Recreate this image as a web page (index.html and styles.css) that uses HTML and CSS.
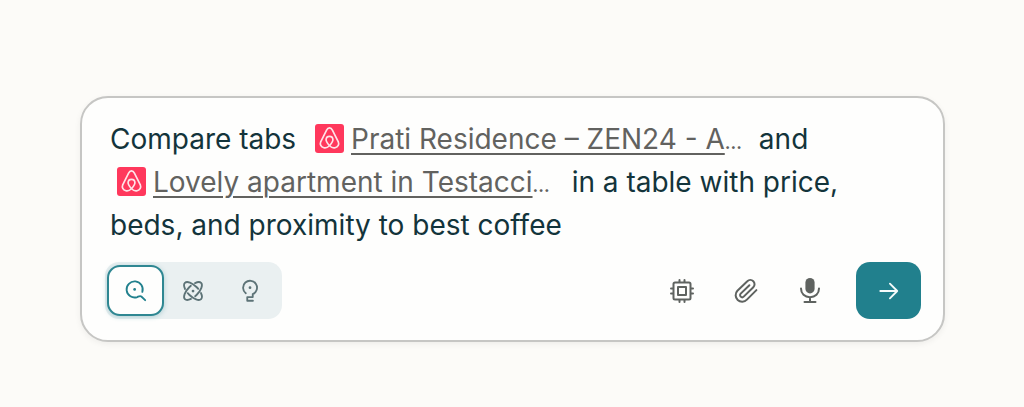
FILE: index.html
```html
<!DOCTYPE html>
<html lang="en">
<head>
    <meta charset="UTF-8">
    <meta name="viewport" content="width=device-width, initial-scale=1.0">
    <title>Ask</title>
    <link rel="stylesheet" href="styles.css">
</head>
<body>

<svg class="symbols" aria-hidden="true">
    <symbol id="airbnb" viewBox="0 0 28 28">
        <path d="M14 21C11.8 18.6 10.7 16.9 10.7 15.3C10.7 13.3 12 12 14 12C16 12 17.3 13.3 17.3 15.3C17.3 16.9 16.2 18.6 14 21C12.2 22.7 10.4 23.4 8.6 22.9C5.6 22.1 4.5 19.7 5.5 17.3L11.2 5.8C11.9 4.4 12.8 3.8 14 3.8C15.2 3.8 16.1 4.4 16.8 5.8L22.5 17.3C23.5 19.7 22.4 22.1 19.4 22.9C17.6 23.4 15.8 22.7 14 21Z"/>
    </symbol>
</svg>

<form class="ask-box">
    <div class="prompt" role="textbox" aria-label="Prompt" aria-multiline="true" contenteditable="true" spellcheck="false">Compare tabs <span class="tab"><svg class="tab-icon"><use href="#airbnb"/></svg><a href="#prati">Prati Residence – ZEN24 - A</a><span class="dots">…</span></span> and<br><span class="tab wrapped"><svg class="tab-icon"><use href="#airbnb"/></svg><a href="#lovely">Lovely apartment in Testacci</a><span class="dots">…</span></span> in a table with price,<br>beds, and proximity to best coffee</div>

    <div class="toolbar">
        <div class="modes">
            <button type="button" class="mode active" aria-label="Search" aria-pressed="true">
                <svg viewBox="0 0 24 24">
                    <path d="M18.9 13A8.8 8.8 0 1 0 13.4 18.6C15 17.9 16.4 16.8 17.8 18L22 22"/>
                    <circle class="dot" cx="10.5" cy="10.3" r="1.5"/>
                </svg>
            </button>
            <button type="button" class="mode" aria-label="Research" aria-pressed="false">
                <svg viewBox="0 0 24 24">
                    <ellipse class="orbit" cx="12" cy="12" rx="12.5" ry="5.8" pathLength="100" transform="rotate(45 12 12)"/>
                    <ellipse class="orbit" cx="12" cy="12" rx="12.5" ry="5.8" pathLength="100" transform="rotate(-45 12 12)"/>
                    <circle class="dot" cx="12" cy="12" r="1.5"/>
                </svg>
            </button>
            <button type="button" class="mode" aria-label="Labs" aria-pressed="false">
                <svg viewBox="0 0 24 24">
                    <path d="M7.4 14.4A7.6 7.6 0 1 1 15 15.4V18.6H9V22.6H15.2"/>
                    <circle class="dot" cx="12" cy="8.4" r="1.5"/>
                </svg>
            </button>
        </div>

        <div class="actions">
            <button type="button" class="action" aria-label="Choose model">
                <svg viewBox="0 0 24 24">
                    <rect x="3.5" y="3.5" width="17" height="17" rx="1.5"/>
                    <rect x="8" y="8" width="8" height="8"/>
                    <path d="M9.5 3V1M14.5 3V1M9.5 21V23M14.5 21V23M3 9.5H1M3 14.5H1M21 9.5H23M21 14.5H23"/>
                </svg>
            </button>
            <button type="button" class="action" aria-label="Attach file">
                <svg viewBox="0 0 24 24">
                    <path d="M22.4 11.1L12.9 20.6A6.3 6.3 0 0 1 3.4 11.7L13.3 2.3A4.2 4.2 0 0 1 19.3 8.3L9.7 17.6A2.1 2.1 0 0 1 6.7 14.6L15.4 6.2"/>
                </svg>
            </button>
            <button type="button" class="action" aria-label="Dictate">
                <svg viewBox="0 0 24 24">
                    <rect class="dot" x="7.4" y="-1" width="9.2" height="15.4" rx="4.6"/>
                    <path d="M3 9.5C3 14.8 6.7 18.2 12 18.2S21 14.8 21 9.5M12 18.2V23M6.5 23H17.5"/>
                </svg>
            </button>
            <button type="submit" class="submit" aria-label="Submit">
                <svg viewBox="0 0 24 24">
                    <path d="M2.5 12H21M13 4L21 12L13 20"/>
                </svg>
            </button>
        </div>
    </div>
</form>

</body>
</html>
```
FILE: styles.css
```css
* {
    box-sizing: border-box;
}

body {
    margin: 0;
    padding: 96px 79px 64px 80px;
    background-color: #fcfbf8;
    color: #13343b;
    font-family: Inter, "Liberation Sans", sans-serif;
}

.symbols {
    display: none;
}

.ask-box {
    padding: 20px 22px 21px 23px;
    background-color: #fefefd;
    border: 2px solid #c6c6c4;
    border-radius: 28px;
    box-shadow: 0 2px 6px rgba(0, 0, 0, 0.06);
}

.prompt {
    padding: 0 5px;
    font-size: 28px;
    line-height: 43px;
    outline: none;
}

.tab {
    margin: 0 9px 0 11px;
    color: #62625f;
    white-space: nowrap;
}

.tab.wrapped {
    margin: 0 14px 0 7px;
}

.tab a {
    color: inherit;
    text-decoration-thickness: 2px;
    text-underline-offset: 4px;
}

.dots {
    font-size: 18px;
    font-weight: 600;
    line-height: 1;
}

.tab-icon {
    width: 29px;
    height: 29px;
    margin-right: 7px;
    vertical-align: -4px;
    background-color: #ff385c;
    border-radius: 3px;
    fill: none;
    stroke: #ffe4e8;
    stroke-width: 1.6;
}

.toolbar {
    display: flex;
    justify-content: space-between;
    align-items: center;
    margin-top: 15px;
}

.modes {
    display: flex;
    padding: 3px 4px 3px 2px;
    background-color: #eaf0f1;
    border-radius: 14px;
}

.actions {
    display: flex;
    align-items: center;
}

button {
    display: flex;
    justify-content: center;
    align-items: center;
    padding: 0;
    border: none;
    background: none;
    color: #5f6360;
    cursor: pointer;
}

button svg {
    width: 24px;
    height: 24px;
    overflow: visible;
    fill: none;
    stroke: currentColor;
    stroke-width: 2;
    stroke-linecap: round;
    stroke-linejoin: round;
}

.dot {
    fill: currentColor;
    stroke: none;
}

.orbit {
    stroke-dasharray: 41 9;
    stroke-dashoffset: -38;
}

.mode {
    width: 57px;
    height: 51px;
    color: #5d7377;
}

.mode svg {
    width: 22px;
    height: 22px;
}

.mode.active {
    background-color: #fefefd;
    border: 2px solid #2f8792;
    border-radius: 13px;
    box-shadow: 0 1px 5px rgba(33, 128, 141, 0.3);
    color: #21808d;
}

.action {
    width: 64px;
    height: 57px;
}

.submit {
    width: 65px;
    height: 57px;
    margin-left: 14px;
    background-color: #21808d;
    border-radius: 14px;
    color: #f5fbfb;
}

.submit svg {
    width: 22px;
    height: 22px;
}
```
